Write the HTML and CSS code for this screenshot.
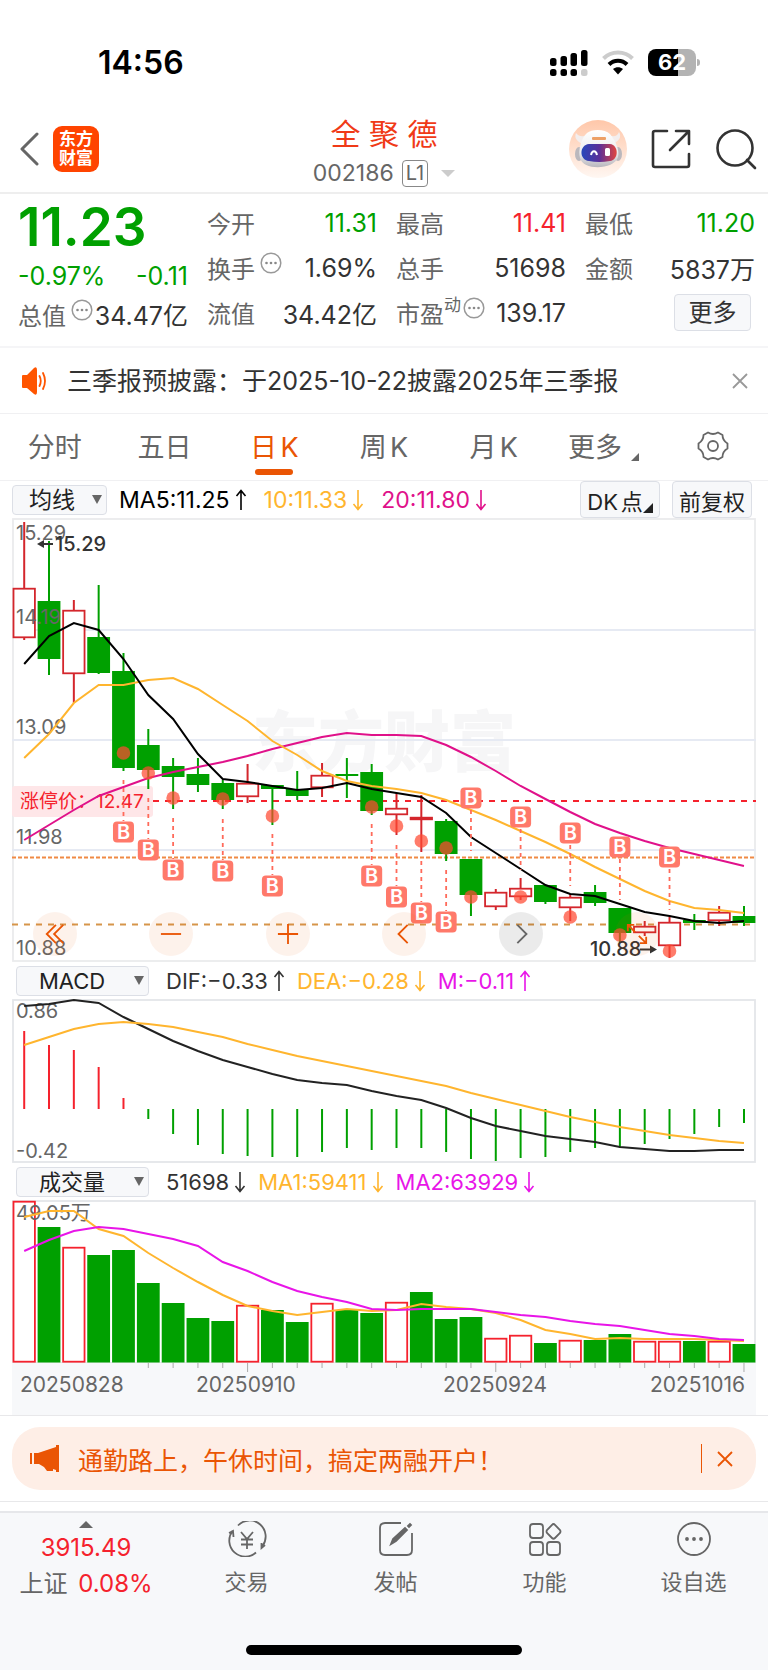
FILE: index.html
```
<!DOCTYPE html>
<html lang="zh-CN">
<head>
  <meta charset="UTF-8" />
  <meta name="viewport" content="width=device-width, initial-scale=1.0"/>
  <title>全聚德 002186 日K</title>
  <link rel="stylesheet" href="styles.css">
</head>
<body>
  <svg class="defs" aria-hidden="true">
    <symbol id="up" viewBox="0 0 12 22"><path d="M6 21V1.500M1.500 7 6 1.500 10.500 7" fill="none" stroke="currentColor" stroke-width="1.600"/></symbol>
    <symbol id="down" viewBox="0 0 12 22"><path d="M6 1V20.500M1.500 15 6 20.500 10.500 15" fill="none" stroke="currentColor" stroke-width="1.600"/></symbol>
    <symbol id="info" viewBox="0 0 22 22"><circle cx="11" cy="11" r="9.800" fill="none" stroke="#999" stroke-width="1.500"/><g fill="#888"><circle cx="6.500" cy="11" r="1.300"/><circle cx="11" cy="11" r="1.300"/><circle cx="15.500" cy="11" r="1.300"/></g></symbol>
  </svg>

  <div class="status">
    <span class="clock">14:56</span>
    <div class="status-icons">
      <svg width="38" height="27" viewBox="0 0 38 27">
        <rect x="0" y="9" width="6.500" height="8" rx="2.500"/><rect x="10.500" y="7" width="6.500" height="10" rx="2.500"/><rect x="20.500" y="4" width="6.500" height="13" rx="2.500"/><rect x="31" y="1" width="6.500" height="16" rx="2.500"/>
        <rect x="0" y="20" width="6.500" height="7" rx="2.500"/><rect x="10.500" y="20" width="6.500" height="7" rx="2.500"/><rect x="20.500" y="20" width="6.500" height="7" rx="2.500"/><rect x="31" y="20" width="6.500" height="7" rx="2.500" fill="#ccc"/>
      </svg>
      <svg width="32" height="25" viewBox="0 0 32 25" fill="none" stroke-width="4">
        <path d="M1.500 8.500C9.500 .500 22.500 .500 30.500 8.500" stroke="#ccc"/>
        <path d="M7 14.500C12 9.500 20 9.500 25 14.500" stroke="#000"/>
        <path d="M11 19C14 16.500 18 16.500 21 19L16 24.500Z" fill="#000"/>
      </svg>
      <div class="battery">62</div>
    </div>
  </div>

  <header class="header">
    <div class="header-left">
      <button class="icon-btn" aria-label="返回">
        <svg width="20" height="34" viewBox="0 0 20 34"><path d="M18 2 3 17 18 32" fill="none" stroke="#666" stroke-width="3" stroke-linecap="round" stroke-linejoin="round"/></svg>
      </button>
      <a class="logo" href="#"><span>东方</span><span>财富</span></a>
    </div>
    <div class="stock">
      <h1>全 聚 德</h1>
      <button class="code">002186 <span class="level">L1</span><i class="caret"></i></button>
    </div>
    <div class="header-right">
      <button class="icon-btn" aria-label="智能助手">
        <svg width="58" height="58" viewBox="0 0 58 58">
          <defs>
            <linearGradient id="peach" x1="0" y1="0" x2="0" y2="1"><stop offset="0" stop-color="#ffc7a9"/><stop offset="1" stop-color="#fff7f2"/></linearGradient>
            <linearGradient id="shell" x1="0" y1="0" x2="0" y2="1"><stop offset="0" stop-color="#fff"/><stop offset=".6" stop-color="#ececee"/><stop offset="1" stop-color="#b9b7bd"/></linearGradient>
            <linearGradient id="visor" x1="0" y1="0" x2="1" y2="0"><stop offset="0" stop-color="#2748bb"/><stop offset=".5" stop-color="#5a2f99"/><stop offset="1" stop-color="#e2453f"/></linearGradient>
          </defs>
          <circle cx="29" cy="29" r="29" fill="url(#peach)"/>
          <path d="M13 24C8 21 5 18 7 13 10 17 14 17 18 15ZM44 24C50 21 53 17 50 12 48 17 44 17 40 15Z" fill="#f3eeee"/>
          <ellipse cx="10" cy="34" rx="4" ry="7" fill="#bbb8bd"/><ellipse cx="49" cy="34" rx="4" ry="7" fill="#bbb8bd"/>
          <path d="M18 13C23 9 36 9 41 14 46 20 51 30 49 37 45 50 14 51 11 38 9 31 12 18 18 13Z" fill="url(#shell)"/>
          <path d="M20 24H41C50 25 50 40 41 41Q30 43 20 41C10 40 10 25 20 24Z" fill="url(#visor)"/>
          <path d="M22 35C23 30 27 30 28 35" fill="none" stroke="#fff" stroke-width="2"/>
          <rect x="36" y="28" width="5" height="8" rx="1.500" fill="#fff"/>
          <rect x="23" y="17" width="14" height="3" rx="1" fill="#eda066"/>
        </svg>
      </button>
      <button class="icon-btn" aria-label="分享">
        <svg width="40" height="40" viewBox="0 0 40 40" fill="none" stroke="#333" stroke-width="2.600" stroke-linecap="round" stroke-linejoin="round"><path d="M16 2H4Q2 2 2 4V36Q2 38 4 38H36Q38 38 38 36V25M25 2H38V15M37 3 19 21"/></svg>
      </button>
      <button class="icon-btn" aria-label="搜索">
        <svg width="42" height="42" viewBox="0 0 42 42" fill="none" stroke="#333" stroke-width="2.600" stroke-linecap="round"><circle cx="20" cy="20" r="17.500"/><path d="M32 32 40 40"/></svg>
      </button>
    </div>
  </header>

  <section class="quote">
    <div class="col">
      <strong class="price">11.23</strong>
      <div class="change"><span>-0.97%</span><span>-0.11</span></div>
      <div class="cap"><label>总值<svg class="info"><use href="#info"/></svg></label><b>34.47亿</b></div>
    </div>
    <div class="col">
      <div class="row"><label>今开</label><b class="down">11.31</b></div>
      <div class="row"><label>换手<svg class="info"><use href="#info"/></svg></label><b>1.69%</b></div>
      <div class="row"><label>流值</label><b>34.42亿</b></div>
    </div>
    <div class="col">
      <div class="row"><label>最高</label><b class="up">11.41</b></div>
      <div class="row"><label>总手</label><b>51698</b></div>
      <div class="row"><label>市盈<sup>动</sup><svg class="info tight"><use href="#info"/></svg></label><b>139.17</b></div>
    </div>
    <div class="col">
      <div class="row"><label>最低</label><b class="down">11.20</b></div>
      <div class="row"><label>金额</label><b>5837万</b></div>
      <div class="row end"><button class="more">更多</button></div>
    </div>
  </section>

  <section class="notice">
    <svg width="26" height="28" viewBox="0 0 26 28"><path d="M1 9Q1 8 2 8H6L13 1Q16-1 16 3V25Q16 29 13 27L6 21H2Q1 21 1 20Z" fill="#ff5500"/><path d="M18.500 9Q21 14 18.500 19M22 6Q26 14 22 22" fill="none" stroke="#ff5500" stroke-width="1.800" stroke-linecap="round"/></svg>
    <p>三季报预披露：于2025-10-22披露2025年三季报</p>
    <button class="icon-btn" aria-label="关闭公告"><svg width="16" height="16" viewBox="0 0 16 16"><path d="M1 1 15 15M15 1 1 15" stroke="#999" stroke-width="1.800"/></svg></button>
  </section>

  <nav class="tabs">
    <button>分时</button>
    <button>五日</button>
    <button class="active">日K</button>
    <button>周K</button>
    <button>月K</button>
    <button>更多<i class="corner"></i></button>
    <button aria-label="设置">
      <svg width="32" height="30" viewBox="0 0 32 30" fill="none" stroke="#666" stroke-width="1.800" stroke-linejoin="round"><path d="M11 1.500Q16 4.500 21 1.500L25.500 4Q25.500 9.500 30.500 12.500V17.500Q25.500 20.500 25.500 26L21 28.500Q16 25.500 11 28.500L6.500 26Q6.500 20.500 1.500 17.500V12.500Q6.500 9.500 6.500 4Z"/><circle cx="16" cy="15" r="5"/></svg>
    </button>
  </nav>

  <main class="charts">
    <div class="toolbar">
      <span class="select narrow"><select aria-label="主图指标"><option>均线</option></select></span>
      <span class="black">MA5:11.25<svg class="arrow"><use href="#up"/></svg></span>
      <span class="amber wide">10:11.33<svg class="arrow"><use href="#down"/></svg></span>
      <span class="pink wide">20:11.80<svg class="arrow"><use href="#down"/></svg></span>
      <div class="tools">
        <button>DK点<i class="corner"></i></button>
        <button>前复权</button>
      </div>
    </div>
    <div class="kline">
      <svg id="kline" viewBox="12 518 744 444" role="img" aria-label="日K线"></svg>
      <div class="controls">
        <button aria-label="最早"><svg viewBox="0 0 24 24"><path d="M13 2 3 12 13 22M21 2 11 12 21 22"/></svg></button>
        <button aria-label="缩小"><svg viewBox="0 0 24 24"><path d="M1 12H23"/></svg></button>
        <button aria-label="放大"><svg viewBox="0 0 24 24"><path d="M1 12H23M12 1V23"/></svg></button>
        <button aria-label="前移"><svg viewBox="0 0 24 24"><path d="M16 2 6 12 16 22"/></svg></button>
        <button class="grey" aria-label="后移"><svg viewBox="0 0 24 24"><path d="M8 2 18 12 8 22"/></svg></button>
        <button aria-label="全屏"><svg viewBox="0 0 24 24"><path d="M10 10 2 2M2 9V2H9M14 14 22 22M22 15V22H15"/></svg></button>
      </div>
    </div>

    <div class="toolbar sub">
      <span class="select"><select aria-label="副图指标一"><option>MACD</option></select></span>
      <span>DIF:−0.33<svg class="arrow"><use href="#up"/></svg></span>
      <span class="amber">DEA:−0.28<svg class="arrow"><use href="#down"/></svg></span>
      <span class="magenta">M:−0.11<svg class="arrow"><use href="#up"/></svg></span>
    </div>
    <svg id="macd" viewBox="12 999 744 164" role="img" aria-label="MACD"></svg>

    <div class="toolbar sub">
      <span class="select"><select aria-label="副图指标二"><option>成交量</option></select></span>
      <span>51698<svg class="arrow"><use href="#down"/></svg></span>
      <span class="amber">MA1:59411<svg class="arrow"><use href="#down"/></svg></span>
      <span class="magenta">MA2:63929<svg class="arrow"><use href="#down"/></svg></span>
    </div>
    <svg id="volume" viewBox="12 1200 744 215" role="img" aria-label="成交量"></svg>
  </main>

  <div class="promo">
    <div class="banner">
      <svg width="30" height="28" viewBox="0 0 30 28" fill="#ea5504"><rect x="0" y="8" width="2" height="11"/><path d="M4 8H8L26 2V0H29V27H26V25L23 24V26H17L14 22 9 19H4Z"/></svg>
      <a href="#">通勤路上，午休时间，搞定两融开户！</a>
      <button class="icon-btn" aria-label="关闭"><svg width="16" height="16" viewBox="0 0 16 16"><path d="M1 1 15 15M15 1 1 15" stroke="#ea5504" stroke-width="1.800"/></svg></button>
    </div>
  </div>

  <footer class="bottom">
    <nav class="bar">
      <button class="index">
        <i class="triangle"></i>
        <span class="up">3915.49</span>
        <span>上证 <em>0.08%</em></span>
      </button>
      <button>
        <svg width="40" height="36" viewBox="0 0 40 36"><path d="M11 4.500A16 16 0 0 1 35.500 25M29 31.500A16 16 0 0 1 5.500 10M2 12 6 10 6.500 16M38 24 34.500 27V22M14 11 20 18 26 11M20 18V28M14 18.500H26M14 23.500H26"/></svg>
        交易
      </button>
      <button>
        <svg width="36" height="36" viewBox="0 0 36 36"><path d="M23 2H7Q2 2 2 7V29Q2 34 7 34H29Q34 34 34 29V12"/><path d="M13 23 15 18 27 7 29 9 18 20ZM30 5 32 3 33 4 31 6Z" fill="#666"/></svg>
        发帖
      </button>
      <button>
        <svg width="36" height="36" viewBox="0 0 36 36"><rect x="3" y="3" width="13" height="14" rx="3"/><rect x="3" y="21" width="13" height="13" rx="3"/><rect x="20" y="21" width="13" height="13" rx="3"/><path d="M25 4Q26.500 2 28 4L33 9Q34 10.500 33 12L28 17Q26.500 18.500 25 17L20 12Q19 10.500 20 9Z"/></svg>
        功能
      </button>
      <button>
        <svg width="36" height="36" viewBox="0 0 36 36"><circle cx="18" cy="18" r="16"/><g fill="#666"><circle cx="11" cy="18" r="1"/><circle cx="18" cy="18" r="1"/><circle cx="25" cy="18" r="1"/></g></svg>
        设自选
      </button>
    </nav>
    <div class="home"></div>
  </footer>

  <script src="chart.js"></script>
</body>
</html>
```
FILE: styles.css
```
* {
  box-sizing: border-box;
}

body {
  margin: 0;
  font-family: Inter, "Noto Sans CJK SC", sans-serif;
  font-size: 23px;
  color: #333;
  background: #fff;
}

button {
  font: inherit;
  color: inherit;
  background: none;
  border: 0;
  padding: 0;
}

svg {
  display: block;
  flex: none;
}

i, em {
  font-style: normal;
}

a {
  color: inherit;
  text-decoration: none;
}

.defs {
  width: 0;
  height: 0;
  position: absolute;
}

.up { color: #f5222d; }
.down { color: #00a000; }
.black { color: #000; }
.amber { color: #ffb52e; }
.pink { color: #e0118a; }
.magenta { color: #e815e8; }

.icon-btn {
  display: flex;
}

/* status bar */
.status {
  display: flex;
  justify-content: space-between;
  align-items: center;
  height: 106px;
  padding: 18px 68px 0 98px;
}

.clock {
  font-size: 32px;
  font-weight: 600;
  color: #000;
}

.status-icons {
  display: flex;
  align-items: center;
  gap: 14px;
}

.battery {
  position: relative;
  width: 48px;
  height: 27px;
  margin-right: 4px;
  border-radius: 8px;
  background: linear-gradient(90deg, #000 62%, #b3b3b3 62%);
  color: #fff;
  font-size: 22px;
  font-weight: 700;
  line-height: 27px;
  text-align: center;
}

.battery::after {
  content: "";
  position: absolute;
  right: -4px;
  top: 10px;
  width: 3px;
  height: 7px;
  border-radius: 0 3px 3px 0;
  background: #b3b3b3;
}

/* header */
.header {
  display: grid;
  grid-template-columns: 1fr auto 1fr;
  align-items: center;
  height: 88px;
  padding: 0 11px;
  border-bottom: 2px solid #eee;
}

.header-left,
.header-right {
  display: flex;
  align-items: center;
}

.header-left {
  gap: 14px;
  padding-left: 8px;
}

.header-right {
  justify-content: flex-end;
  gap: 24px;
}

.logo {
  display: flex;
  flex-direction: column;
  justify-content: center;
  width: 46px;
  height: 46px;
  border-radius: 9px;
  background: #ff4400;
  color: #fff;
  font-size: 17px;
  font-weight: 700;
  line-height: 19px;
  text-align: center;
}

.stock {
  align-self: end;
  text-align: center;
}

.stock h1 {
  margin: 0;
  color: #f03a17;
  font-size: 30px;
  font-weight: 400;
  line-height: 40px;
}

.code {
  display: flex;
  align-items: center;
  height: 38px;
  color: #666;
}

.level {
  margin-left: 8px;
  padding: 0 3px;
  border: 1px solid #888;
  border-radius: 4px;
  font-size: 20px;
  line-height: 25px;
}

.caret {
  margin-left: 13px;
  border: 7px solid transparent;
  border-top-color: #ccc;
  border-bottom: 0;
}

/* quote */
.quote {
  display: grid;
  grid-template-columns: repeat(4, 1fr);
  gap: 19px;
  padding: 6px 13px 11px 18px;
  border-bottom: 2px solid #f5f5f7;
}

.row,
.cap,
.change {
  display: flex;
  justify-content: space-between;
  align-items: center;
  height: 45px;
  font-size: 25px;
  white-space: nowrap;
}

.quote label {
  display: flex;
  align-items: center;
  color: #666;
  font-size: 24px;
}

.quote b {
  font-weight: 400;
}

.quote sup {
  align-self: flex-start;
  font-size: 17px;
  line-height: 20px;
}

.price {
  display: block;
  color: #00a000;
  font-size: 53px;
  font-weight: 600;
  line-height: 54px;
}

.change {
  height: 44px;
  color: #00a000;
}

.cap {
  height: 32px;
}

.info {
  width: 22px;
  height: 22px;
  margin: 0 0 9px 5px;
}

.info.tight {
  margin-left: 2px;
}

.row.end {
  justify-content: flex-end;
}

.more {
  width: 77px;
  height: 37px;
  margin-right: 4px;
  border: 1px solid #dcdfe6;
  border-radius: 4px;
  background: #f7f8fa;
  font-size: 24px;
  line-height: 32px;
}

/* notice */
.notice {
  display: flex;
  align-items: center;
  height: 66px;
  padding: 0 20px 0 21px;
  border-bottom: 1px solid #f0f0f2;
}

.notice p {
  flex: 1;
  margin: 0 0 0 20px;
  padding-bottom: 3px;
  font-size: 25px;
}

/* tabs */
.tabs {
  display: flex;
  height: 67px;
  border-bottom: 1px solid #f0f0f2;
  color: #666;
  font-size: 27px;
  text-autospace: normal;
}

.tabs button {
  position: relative;
  display: flex;
  flex: 1;
  align-items: center;
  justify-content: center;
  padding-bottom: 3px;
}

.tabs .active {
  color: #ea5504;
}

.tabs .active::after {
  content: "";
  position: absolute;
  bottom: 5px;
  width: 38px;
  height: 6px;
  border-radius: 3px;
  background: #ea5504;
}

.corner {
  align-self: flex-end;
  border: 4px solid #666;
  border-top-color: transparent;
  border-left-color: transparent;
}

.tabs .corner {
  margin: 0 0 16px 9px;
}

/* charts */
.charts {
  padding: 0 12px;
  border-bottom: 1px solid #e8e8ea;
}

.charts > svg,
.kline > svg {
  width: 100%;
  height: auto;
}

.toolbar {
  display: flex;
  align-items: center;
  gap: 12px;
  height: 37px;
  white-space: nowrap;
}

.toolbar > span {
  display: flex;
  align-items: center;
}

.toolbar .wide {
  margin-left: 5px;
}

.sub {
  padding-left: 4px;
  font-size: 22px;
}

.arrow {
  width: 12px;
  height: 22px;
  margin-left: 5px;
}

.select {
  position: relative;
  width: 95px;
  height: 30px;
}

.sub .select {
  width: 133px;
  margin-right: 5px;
}

.select::after {
  content: "";
  position: absolute;
  right: 5px;
  top: 10px;
  border: 5px solid transparent;
  border-top: 9px solid #666;
  border-bottom: 0;
}

.select select {
  width: 100%;
  height: 100%;
  padding: 0 20px 0 22px;
  border: 1px solid #dcdfe6;
  border-radius: 4px;
  background: #f7f8fa;
  color: #222;
  font: inherit;
  line-height: 28px;
  appearance: none;
}

.select.narrow select {
  padding: 0 16px;
}

.tools {
  display: flex;
  gap: 12px;
  margin: 0 4px 0 auto;
}

.tools button {
  display: flex;
  align-items: center;
  justify-content: center;
  width: 80px;
  height: 37px;
  border: 1px solid #dcdfe6;
  border-radius: 4px;
  background: #f7f8fa;
  color: #222;
  font-size: 22px;
  text-autospace: normal;
}

.tools .corner {
  margin-bottom: 4px;
  border-width: 5px;
  border-right-color: #222;
  border-bottom-color: #222;
}

.kline {
  position: relative;
}

.controls {
  position: absolute;
  left: 21px;
  right: 97px;
  bottom: 6px;
  display: flex;
  justify-content: space-between;
}

.controls button {
  display: flex;
  align-items: center;
  justify-content: center;
  width: 44px;
  height: 44px;
  border-radius: 50%;
  background: rgba(234, 85, 4, 0.08);
}

.controls svg {
  width: 22px;
  height: 22px;
  fill: none;
  stroke: #ea5504;
  stroke-width: 2;
}

.controls .grey {
  background: rgba(0, 0, 0, 0.08);
}

.controls .grey svg {
  stroke: #666;
}

.axis {
  fill: #666;
  font-size: 20px;
}

.date {
  fill: #666;
  font-size: 21px;
}

.mark {
  fill: #333;
  font-size: 20px;
  font-weight: 500;
}

.limit {
  fill: #f5222d;
  font-size: 19px;
}

.watermark {
  fill: #f6f6f7;
  font-size: 66px;
  font-weight: 900;
}

.buy {
  fill: #fff;
  font-size: 20px;
  font-weight: 600;
  text-anchor: middle;
}

/* promo banner */
.promo {
  padding: 11px 12px;
  border-bottom: 1px solid #e8e8ea;
}

.banner {
  display: flex;
  align-items: center;
  height: 63px;
  padding: 0 23px 0 18px;
  border-radius: 28px;
  background: #feeee6;
  color: #ea5504;
  font-size: 25px;
}

.banner a {
  flex: 1;
  margin-left: 18px;
}

.banner button {
  align-items: center;
  height: 29px;
  padding-left: 15px;
  border-left: 1px solid #ea5504;
}

/* bottom bar */
.bottom {
  margin-top: 9px;
  padding-bottom: 15px;
  border-top: 2px solid #e6e7ea;
  background: #f7f8fa;
}

.bar {
  display: flex;
  height: 132px;
  padding-top: 8px;
  color: #666;
  font-size: 22px;
}

.bar button {
  display: flex;
  flex: 149;
  flex-direction: column;
  align-items: center;
  gap: 9px;
  line-height: 32px;
}

.bar svg {
  fill: none;
  stroke: #666;
  stroke-width: 1.8;
}

.bar .index {
  flex: 172;
  gap: 4px;
  font-size: 24px;
}

.bar em {
  margin-left: 4px;
  color: #f5222d;
}

.triangle {
  border: 7px solid transparent;
  border-top: 0;
  border-bottom-color: #666;
}

.home {
  width: 36%;
  height: 10px;
  margin: 0 auto;
  border-radius: 5px;
  background: #000;
}
```
FILE: chart.js
```
const GREEN = "#00a000";
const RED = "#d4262c";
const AMBER = "#ffb52e";
const STEP = 24.82;
const x = i => 24.2 + i * STEP;

// [body top, body bottom, high, low, rising]
const candles = [
  [588, 638, 522, 640, 1], [601, 659, 541, 675, 0], [610, 674, 600, 703, 1],
  [637, 673, 585, 674, 0], [671, 768, 653, 771, 0], [745, 770, 729, 789, 0],
  [766, 777, 758, 809, 0], [774, 785, 758, 792, 0], [783, 800, 780, 809, 0],
  [783, 797, 764, 803, 1], [785, 789, 785, 825, 0], [789, 796, 771, 800, 0],
  [775, 788, 763, 797, 1], [774, 776, 758, 798, 0], [772, 811, 764, 815, 0],
  [808, 815, 793, 835, 1], [817, 820, 795, 852, 1], [821, 854, 819, 861, 0],
  [859, 895, 859, 916, 0], [892, 907, 889, 910, 1], [888, 897, 878, 900, 1],
  [885, 902, 885, 904, 0], [897, 908, 894, 921, 1], [892, 903, 885, 906, 0],
  [908, 933, 908, 943, 0], [926, 933, 921, 936, 1], [922, 946, 917, 958, 1],
  [920, 923, 914, 930, 0], [912, 921, 906, 926, 1], [916, 923, 906, 926, 0]
];
const ma5 = [664, 636, 623, 630, 659, 695, 719, 754, 779, 782, 786, 790, 788, 783, 789, 793, 797, 813, 837, 853, 869, 885, 894, 896, 904, 912, 916, 921, 923, 921];
const ma10 = [758, 734, 703, 685, 685, 680, 678, 689, 705, 721, 741, 755, 771, 781, 786, 789, 793, 800, 810, 820, 831, 842, 854, 867, 879, 891, 901, 908, 910, 913];
const ma20 = [840, 825, 810, 796, 787, 778, 772, 767, 762, 756, 749, 743, 737, 733, 735, 735, 736, 745, 757, 771, 786, 799, 812, 824, 833, 841, 848, 854, 860, 866];

// [candle, dot, badge]
const buys = [
  [4, 753, 832], [5, 773, 850], [6, 798, 870], [8, 799, 871], [10, 816, 886],
  [14, 807, 876], [15, 826, 897], [16, 841, 913], [17, 848, 922], [18, 897, 798],
  [20, 897, 817], [22, 917, 833], [24, 935, 847], [26, 951, 857]
];

const bars = [1031, 1045, 1050, 1067, 1098, 1119, 1134, 1145, 1154, 1156, 1157, 1157, 1152, 1148, 1150, 1148, 1148, 1152, 1159, 1161, 1158, 1157, 1152, 1148, 1148, 1144, 1139, 1134, 1127, 1123];
const dif = [1006, 1004, 1000, 1003, 1017, 1029, 1041, 1051, 1060, 1067, 1074, 1080, 1083, 1085, 1091, 1096, 1100, 1108, 1118, 1126, 1131, 1136, 1139, 1142, 1147, 1149, 1151, 1151, 1150, 1150];
const dea = [1045, 1037, 1029, 1024, 1022, 1024, 1027, 1032, 1037, 1044, 1050, 1056, 1061, 1066, 1071, 1076, 1081, 1086, 1093, 1099, 1105, 1111, 1117, 1122, 1127, 1131, 1135, 1138, 1141, 1143];

const volumes = [1201, 1227, 1247, 1255, 1250, 1283, 1303, 1318, 1321, 1305, 1310, 1322, 1303, 1310, 1313, 1302, 1292, 1319, 1317, 1338, 1335, 1343, 1340, 1340, 1334, 1341, 1341, 1341, 1341, 1344];
const volRising = [0, 2, 9, 12, 15, 19, 20, 22, 25, 26, 28];
const vol1 = [1217, 1211, 1211, 1229, 1236, 1253, 1268, 1282, 1295, 1306, 1311, 1315, 1312, 1309, 1311, 1310, 1304, 1307, 1309, 1313, 1320, 1330, 1334, 1339, 1338, 1339, 1339, 1339, 1340, 1341];
const vol2 = [1251, 1240, 1231, 1227, 1229, 1234, 1239, 1246, 1262, 1271, 1282, 1291, 1297, 1302, 1309, 1310, 1309, 1309, 1309, 1312, 1315, 1317, 1321, 1324, 1326, 1330, 1334, 1336, 1339, 1340];

const seg = (x1, y1, x2, y2, color, w = 2, dash = "none") =>
  `<path d="M${x1} ${y1}L${x2} ${y2}" stroke="${color}" stroke-width="${w}" stroke-dasharray="${dash}"/>`;
const box = (bx, y, w, h, fill, stroke = "none", r = 0) =>
  `<rect x="${bx}" y="${y}" width="${w}" height="${h}" fill="${fill}" stroke="${stroke}" stroke-width="1.8" rx="${r}"/>`;
const curve = (ys, color) =>
  `<polyline points="${ys.map((y, i) => x(i) + "," + y).join(" ")}" fill="none" stroke="${color}" stroke-width="2"/>`;
const text = (tx, y, cls, s) => `<text x="${tx}" y="${y}" class="${cls}">${s}</text>`;

function drawKline() {
  let s = box(13, 519, 742, 442, "#fff", "#eaebed");
  s += text(252, 766, "watermark", "东方财富");
  [630, 740, 850].forEach(y => { s += seg(12, y, 756, y, "#e6eaf3"); });
  s += box(12, 786, 141, 31, "#fee6e8", "none", 3);
  s += seg(153, 801, 756, 801, "#f5222d", 2, "6 6");
  s += seg(12, 857.5, 756, 857.5, "#f08a45", 1.8, "4 2");
  s += seg(12, 924.5, 756, 924.5, "#d6954a", 1.8, "6 6");

  candles.forEach(([top, bottom, high, low, rising], i) => {
    const color = rising ? RED : GREEN;
    s += seg(x(i), high, x(i), top, color) + seg(x(i), bottom, x(i), low, color);
    s += rising
      ? box(x(i) - 10.7, top + 0.7, 21.4, Math.max(bottom - top - 1.4, 1), "#fff", RED)
      : box(x(i) - 11.4, top, 22.8, bottom - top, GREEN);
  });

  s += text(20, 808, "limit", "涨停价：12.47");
  s += text(16, 540, "axis", "15.29") + text(16, 624, "axis", "14.19") + text(16, 734, "axis", "13.09");
  s += text(16, 844, "axis", "11.98") + text(16, 955, "axis", "10.88");
  s += curve(ma20, "#e0118a") + curve(ma10, AMBER) + curve(ma5, "#000");

  buys.forEach(([i, dot, badge]) => {
    const from = badge > dot ? badge - 52 : badge + 12;
    s += seg(x(i), from, x(i), from + 41, "#ff6a5a", 1.8, "4 4");
    s += `<circle cx="${x(i)}" cy="${dot}" r="6.8" fill="#ff4932" fill-opacity="0.72"/>`;
    s += box(x(i) - 10.5, badge - 10.5, 21, 21, "#ff796a", "none", 4);
    s += text(x(i), badge + 7, "buy", "B");
  });

  s += text(55, 551, "mark", "15.29") + seg(40, 544, 53, 544, "#333");
  s += `<path d="M37 544 44 540V548Z" fill="#333"/>`;
  s += text(590, 956, "mark", "10.88") + seg(640, 949.5, 652, 949.5, "#333");
  s += `<path d="M657 949.500 650 945.500V953.500Z" fill="#333"/>`;
  document.getElementById("kline").innerHTML = s;
}

function drawMacd() {
  let s = box(13, 1000, 742, 162, "#fff", "#e4e6e9");
  bars.forEach((y, i) => { s += seg(x(i), 1109, x(i), y, y < 1109 ? "#f5222d" : GREEN); });
  s += text(16, 1018, "axis", "0.86") + text(16, 1158, "axis", "-0.42");
  s += curve(dif, "#222") + curve(dea, AMBER);
  document.getElementById("macd").innerHTML = s;
}

function drawVolume() {
  let s = box(13, 1201, 742, 162, "#fff", "#e4e6e9") + box(12, 1363, 744, 52, "#f7f8fa");
  volumes.forEach((y, i) => {
    s += volRising.includes(i)
      ? box(x(i) - 10.7, y + 0.7, 21.4, 1361 - y, "#fff", "#f5222d")
      : box(x(i) - 11.4, y, 22.8, 1362.5 - y, GREEN);
    if (i > 4) s += seg(x(i), 1363, x(i), i % 10 === 9 ? 1372 : 1368, "#aaa", 1);
  });
  s += text(16, 1220, "axis", "49.05万");
  s += curve(vol1, AMBER) + curve(vol2, "#e815e8");
  s += text(20, 1392, "date", "20250828") + text(196, 1392, "date", "20250910");
  s += text(443, 1392, "date", "20250924") + text(650, 1392, "date", "20251016");
  document.getElementById("volume").innerHTML = s;
}

drawKline();
drawMacd();
drawVolume();
```
